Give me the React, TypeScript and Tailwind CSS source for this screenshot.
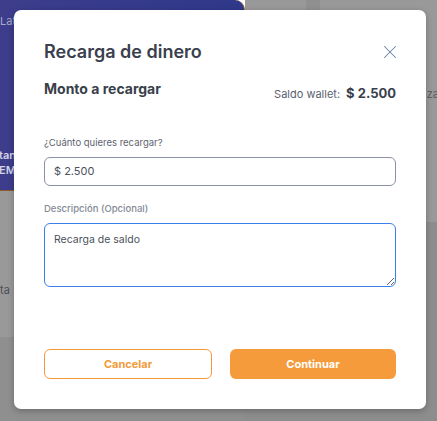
import { X } from "lucide-react";

function Backdrop() {
  return (
    <div className="flex h-full w-full">
      <div className="flex w-[245px] shrink-0 flex-col">
        <div className="flex h-[191px] flex-col justify-between rounded-tr-[10px] border-r border-b border-[#8a5b2c] bg-gradient-to-r from-[#3d3d8c] to-[#2f388a] pt-[14px] pb-[12px]">
          <span className="text-[11px] leading-[14px] text-[#a9a9c9]">Lat</span>
          <div className="text-[11px] font-semibold leading-[15px] text-[#d4d4e6]">
            <div className="-ml-[1px]">tan</div>
            <div className="-ml-[1px]">EM</div>
          </div>
        </div>
        <div className="flex h-[146px] flex-col justify-end bg-[#999999] pb-[40px]">
          <span className="text-[11px] leading-[14px] text-[#4d4f55]">ta</span>
        </div>
        <div className="flex-1 bg-[#8f8f8f]" />
      </div>
      <div className="flex flex-1 flex-col">
        <div className="flex h-[222px] bg-[#999999]">
          <div className="w-[61px]" />
          <div className="h-[12px] w-[14px] bg-[#909090]" />
          <div className="flex flex-1 justify-end pt-[87px]">
            <span className="-mr-[2px] text-[11px] leading-[14px] text-[#5c5e63]">za</span>
          </div>
        </div>
        <div className="flex-1 bg-[#8d8d8d]" />
      </div>
    </div>
  );
}

export default function App() {
  return (
    <div className="relative h-[421px] w-[437px] overflow-hidden font-['Inter',sans-serif]">
      <Backdrop />
      <div className="absolute top-[10px] left-[14px] flex h-[399px] w-[412px] flex-col rounded-[7px] bg-white px-[30px] pt-[28px] pb-[30px] shadow-[0_2px_6px_rgba(0,0,0,0.25)]">
        <div className="flex items-center justify-between">
          <h2 className="text-[18px] leading-[28px] font-semibold text-[#3a404d]">Recarga de dinero</h2>
          <X size={22} strokeWidth={1.1} className="-mr-[5px] text-[#6a84a6]" />
        </div>

        <div className="mt-[13px] flex items-start justify-between">
          <h3 className="text-[14px] leading-[20px] font-bold text-[#3a3f4b]">Monto a recargar</h3>
          <div className="mt-[6px] flex items-baseline gap-[6px] leading-[16px]">
            <span className="text-[11px] text-[#5b6170]">Saldo wallet:</span>
            <span className="text-[13px] font-bold text-[#3a3f4b]">$ 2.500</span>
          </div>
        </div>

        <label className="mt-[34px] mb-[7px] block text-[9.5px] leading-[14px] text-[#5e6470]">¿Cuánto quieres recargar?</label>
        <div className="flex h-[29px] items-center rounded-[6px] border border-[#8b92a3] px-[9px] text-[11px] text-[#4b515c]">
          $ 2.500
        </div>

        <label className="mt-[16px] mb-[7px] block text-[9.5px] leading-[14px] font-medium text-[#858b97]">Descripción (Opcional)</label>
        <textarea
          defaultValue="Recarga de saldo"
          className="h-[64px] w-full resize-y rounded-[6px] border border-[#3b7fe9] px-[9px] pt-[8px] text-[10.5px] leading-[16px] text-[#4b515c] outline-none"
        />

        <div className="mt-auto flex gap-[18px]">
          <button className="h-[30px] flex-1 rounded-[6px] border border-[#f39b3c] bg-white text-[11px] font-bold text-[#f39b3c]">
            Cancelar
          </button>
          <button className="h-[30px] flex-1 rounded-[6px] bg-[#f59b3b] text-[11px] font-bold text-white">
            Continuar
          </button>
        </div>
      </div>
    </div>
  );
}
